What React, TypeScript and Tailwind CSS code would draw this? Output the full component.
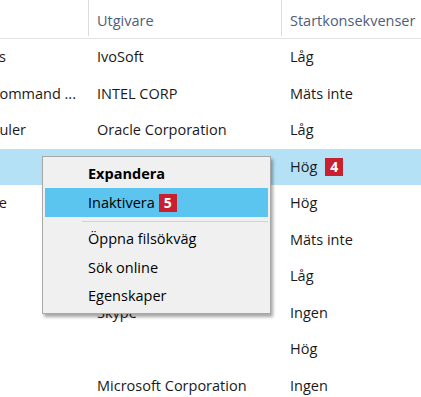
import React from "react";

type Row = {
    name: string;
    namePad: string;
    publisher: string;
    impact: string;
    badge?: string;
    selected?: boolean;
};

const rows: Row[] = [
    { name: "IvoSoft ClassicShell Start Menus", namePad: "pr-[83px]", publisher: "IvoSoft", impact: "Låg" },
    { name: "Intel® Graphics Command ...", namePad: "pr-[13px]", publisher: "INTEL CORP", impact: "Mäts inte" },
    { name: "Java Update Scheduler", namePad: "pr-[63px]", publisher: "Oracle Corporation", impact: "Låg" },
    { name: "", namePad: "", publisher: "", impact: "Hög", badge: "4", selected: true },
    { name: "Microsoft OneDrive", namePad: "pr-[82px]", publisher: "Microsoft Corporation", impact: "Hög" },
    { name: "", namePad: "", publisher: "", impact: "Mäts inte" },
    { name: "", namePad: "", publisher: "Realtek Semiconductor Corporation", impact: "Låg" },
    { name: "", namePad: "", publisher: "Skype", impact: "Ingen" },
    { name: "", namePad: "", publisher: "", impact: "Hög" },
    { name: "", namePad: "", publisher: "Microsoft Corporation", impact: "Ingen" },
];

function Badge({ n }: { n: string }) {
    return (
        <span className="inline-flex items-center justify-center w-[18px] h-[18px] bg-[#c8202f] text-white text-[14px] font-bold leading-none">
            {n}
        </span>
    );
}

export default function App() {
    return (
        <div
            className="relative w-[421px] h-[397px] overflow-hidden bg-white text-[#1a1a1a] text-[14.5px]"
            style={{ fontFamily: '"Open Sans", "Noto Sans", sans-serif' }}
        >
            {/* header */}
            <div className="flex h-[39px] border-b border-[#e3e3e3] text-[#4c607a]">
                <div className="w-[89px] h-[36px] border-r border-[#dcdcdc]" />
                <div className="w-[193px] h-[36px] border-r border-[#dcdcdc] pl-[8px] flex items-center pt-[6px]">
                    Utgivare
                </div>
                <div className="flex-1 pl-[8px] flex items-center pt-[6px] h-[36px]">Startkonsekvenser</div>
            </div>

            {/* rows */}
            {rows.map((r, i) => (
                <div
                    key={i}
                    className={`flex h-[36.5px] items-center ${r.selected ? "bg-[#b4e1f6]" : ""}`}
                >
                    <div className={`w-[89px] shrink-0 flex justify-end overflow-hidden whitespace-nowrap ${r.namePad}`}>
                        {r.name}
                    </div>
                    <div className="w-[193px] shrink-0 pl-[8px] pr-[6px] truncate">{r.publisher}</div>
                    <div className="flex-1 pl-[8px] flex items-center gap-[8px] whitespace-nowrap">
                        {r.impact}
                        {r.badge && <Badge n={r.badge} />}
                    </div>
                </div>
            ))}

            {/* context menu */}
            <div className="absolute left-[42px] top-[156px] w-[229px] bg-[#f0f0f0] border border-[#a8a8a8] p-[2px] shadow-[2px_3px_3px_rgba(0,0,0,0.35)] text-black">
                <div className="h-[29px] pl-[43px] flex items-center font-bold">Expandera</div>
                <div className="h-[29px] pl-[43px] flex items-center gap-[4px] bg-[#5bc4ef]">
                    Inaktivera
                    <Badge n="5" />
                </div>
                <div className="h-[8px] flex items-center pl-[37px]">
                    <div className="h-px w-full bg-[#d2d2d2]" />
                </div>
                <div className="h-[28.5px] pl-[43px] flex items-center">Öppna filsökväg</div>
                <div className="h-[28.5px] pl-[43px] flex items-center">Sök online</div>
                <div className="h-[28.5px] pl-[43px] flex items-center">Egenskaper</div>
            </div>
        </div>
    );
}
